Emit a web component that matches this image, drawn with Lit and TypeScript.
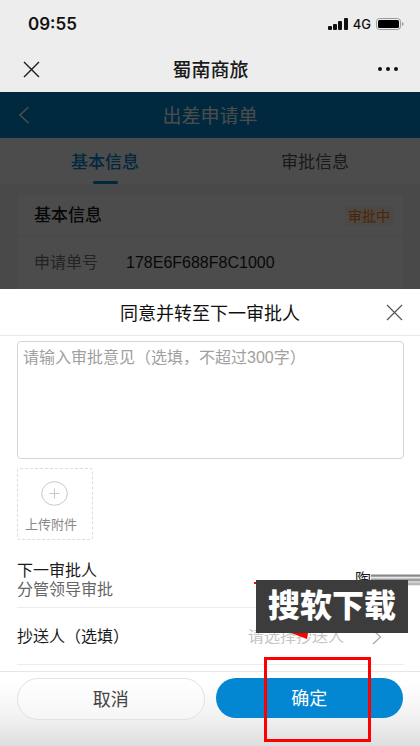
import { LitElement, html, css, svg } from "lit";
import { customElement } from "lit/decorators.js";

const cross = svg`<path d="M1 1 L16 16 M16 1 L1 16" fill="none" stroke="currentColor" />`;

@customElement("app-root")
export class AppRoot extends LitElement {
  static styles = css`
    :host {
      display: flex;
      flex-direction: column;
      min-height: 100vh;
      overflow: hidden;
      background: #ededed;
      color: #1a1a1a;
      font-family: "Liberation Sans", "Noto Sans CJK SC", sans-serif;
      font-size: 16px;
      line-height: 20px;
    }
    * {
      box-sizing: border-box;
    }
    h1, h2, h3, p {
      margin: 0;
      font-size: inherit;
      font-weight: 400;
    }
    button {
      padding: 0;
      border: 0;
      background: none;
      color: inherit;
      font: inherit;
      cursor: pointer;
    }
    svg {
      display: block;
    }
    .status {
      display: flex;
      align-items: center;
      justify-content: space-between;
      height: 46px;
      padding: 2px 16px 0 28px;
      color: #111;
      font-family: Inter, sans-serif;
    }
    .time {
      font-size: 17px;
      font-weight: 600;
    }
    .signals {
      display: flex;
      align-items: center;
      gap: 5px;
      font-size: 13px;
      font-weight: 500;
    }
    .bar {
      display: grid;
      grid-template-columns: 32px 1fr 32px;
      align-items: center;
      height: 46px;
      text-align: center;
    }
    .bar h1, .bar h2 {
      padding-top: 3px;
      font-size: 19px;
    }
    .end {
      justify-self: end;
    }
    .nav {
      padding: 0 22px 0 23px;
    }
    .nav h1 {
      font-weight: 500;
    }
    .page {
      position: relative;
      background: #f4f4f4;
    }
    .mask {
      position: absolute;
      inset: 0;
      background: rgba(0, 0, 0, 0.7);
    }
    .head {
      padding: 0 18px;
      background: #0085d0;
      color: #fff;
    }
    .tabs {
      display: grid;
      grid-template-columns: 1fr 1fr;
      background: #fff;
    }
    .tab {
      display: flex;
      flex-direction: column;
      align-items: center;
      justify-content: space-between;
      height: 46px;
      padding-top: 15px;
      color: #555;
      font-size: 17px;
    }
    .tab.on {
      color: #0085d0;
      font-weight: 500;
    }
    .tab.on::after {
      content: "";
      width: 25px;
      height: 3px;
      border-radius: 2px;
      background: #0085d0;
    }
    .card {
      margin: 11px 17px 0;
      border-radius: 4px 4px 0 0;
      background: #fff;
    }
    .card-head {
      display: flex;
      align-items: center;
      justify-content: space-between;
      height: 41px;
      padding: 2px 10px 0 17px;
      border-bottom: 1px solid #f0f0f0;
      font-size: 17px;
    }
    .card-head h3 {
      font-weight: 500;
    }
    .tag {
      padding: 0 3px;
      background: #fff0e2;
      color: #ff7a1a;
      font-size: 14px;
    }
    .field {
      display: flex;
      gap: 28px;
      align-items: center;
      height: 53px;
      padding: 0 17px;
    }
    .field span {
      color: #777;
    }
    .sheet {
      flex: 1;
      display: flex;
      flex-direction: column;
      background: #fff;
    }
    .sheet-head {
      height: 47px;
      padding: 0 17px;
      border-bottom: 1px solid #e8e8e8;
      color: #111;
    }
    .sheet-head h2 {
      font-size: 18px;
    }
    .sheet-head button {
      color: #555;
    }
    .body {
      display: flex;
      flex-direction: column;
      padding: 5px 16px 6px 17px;
    }
    textarea {
      width: 100%;
      height: 118px;
      padding: 6px 5px;
      border: 1px solid #d4d4d4;
      border-radius: 4px;
      background: #fff;
      font: inherit;
      resize: none;
      outline: 0;
    }
    textarea::placeholder {
      color: #a0a0a0;
      opacity: 1;
    }
    .upload {
      display: flex;
      flex-direction: column;
      align-items: center;
      gap: 9px;
      width: 76px;
      height: 72px;
      margin: 9px 0 11px;
      padding: 12px 8px 0 0;
      border: 1px dashed #ddd;
      border-radius: 3px;
      color: #888;
      font-size: 13px;
    }
    .upload svg {
      margin-left: 6px;
    }
    .row {
      position: relative;
      display: flex;
      align-items: center;
      justify-content: space-between;
      height: 57px;
      padding-top: 2px;
      border-bottom: 1px solid #ececec;
    }
    .label small {
      display: block;
      color: #666;
      font-size: 16px;
      line-height: 18px;
    }
    .person {
      display: flex;
      align-items: center;
      margin-right: -16px;
    }
    .smear {
      width: 49px;
      height: 12px;
      background: linear-gradient(#ddd, #777 15%, #eee 30%, #888 50%, #ddd 65%, #aaa 85%, #fff);
    }
    .pick {
      display: flex;
      align-items: center;
      gap: 28px;
      padding-right: 22px;
      color: #c4c4c4;
    }
    .stamp {
      position: absolute;
      z-index: 1;
      right: -4px;
      top: 29px;
      padding: 3px 12px 4px;
      background: #3c3c3c;
      color: #fff;
      font-size: 32px;
      font-weight: 900;
      line-height: 46px;
    }
    .stamp::before {
      content: "";
      position: absolute;
      left: -2px;
      top: 2px;
      width: 2px;
      height: 2px;
      background: #f00;
    }
    .arrow {
      position: absolute;
      right: 96px;
      top: 25px;
    }
    .foot {
      flex: 1;
      display: grid;
      grid-template-columns: 1fr 1fr;
      align-items: start;
      gap: 11px;
      padding: 6px 17px 25px;
      border-top: 1px solid #e6e6e6;
      background: linear-gradient(#fff 15%, #f2f2f2 60%, #dedede);
      font-size: 18px;
    }
    .cancel, .ok {
      position: relative;
      width: 100%;
      padding-top: 2px;
      border-radius: 21px;
    }
    .cancel {
      height: 42px;
      border: 1px solid #e2e2e2;
      background: linear-gradient(#fff, #f6f6f6);
      color: #444;
    }
    .ok {
      height: 40px;
      background: #0487d2;
      color: #fff;
    }
    .ring {
      position: absolute;
      left: 48px;
      top: -21px;
      width: 107px;
      height: 85px;
      border: 3px solid #f00;
    }
  `;

  render() {
    return html`
      <header>
        <div class="status">
          <span class="time">09:55</span>
          <span class="signals">
            <svg width="20" height="12" viewBox="0 0 20 12" fill="#111">
              <rect x="0" y="8" width="4" height="4" rx="1" />
              <rect x="5" y="6" width="4" height="6" rx="1" />
              <rect x="10" y="3" width="4" height="9" rx="1" />
              <rect x="16" y="0" width="4" height="12" rx="1" />
            </svg>
            4G
            <svg width="28" height="12" viewBox="0 0 28 12">
              <rect x="0.5" y="0.5" width="24" height="11" rx="3" fill="none" stroke="#999" />
              <rect x="2" y="2" width="21" height="8" rx="1.5" fill="#000" />
              <path d="M26 4 Q27.6 4.6 27.6 6 Q27.6 7.4 26 8 Z" fill="#999" />
            </svg>
          </span>
        </div>
        <div class="bar nav">
          <button aria-label="关闭">
            <svg width="17" height="17" viewBox="0 0 17 17" stroke-width="1.4">${cross}</svg>
          </button>
          <h1>蜀南商旅</h1>
          <button class="end" aria-label="更多">
            <svg width="20" height="4" viewBox="0 0 20 4" fill="#111">
              <circle cx="2" cy="2" r="2" /><circle cx="10" cy="2" r="2" /><circle cx="18" cy="2" r="2" />
            </svg>
          </button>
        </div>
      </header>

      <main class="page">
        <div class="bar head">
          <button aria-label="返回">
            <svg width="12" height="18" viewBox="0 0 12 18">
              <path d="M10.5 1 L2 9 L10.5 17" fill="none" stroke="#fff" stroke-width="1.6" />
            </svg>
          </button>
          <h2>出差申请单</h2>
        </div>
        <nav class="tabs">
          <button class="tab on">基本信息</button>
          <button class="tab">审批信息</button>
        </nav>
        <section class="card">
          <div class="card-head"><h3>基本信息</h3><span class="tag">审批中</span></div>
          <div class="field"><span>申请单号</span>178E6F688F8C1000</div>
        </section>
        <div class="mask"></div>
      </main>

      <section class="sheet" role="dialog" aria-labelledby="title">
        <div class="bar sheet-head">
          <span></span>
          <h2 id="title">同意并转至下一审批人</h2>
          <button class="end" aria-label="关闭">
            <svg width="17" height="17" viewBox="0 0 17 17" stroke-width="1.2">${cross}</svg>
          </button>
        </div>
        <div class="body">
          <textarea aria-label="审批意见" placeholder="请输入审批意见（选填，不超过300字）"></textarea>
          <button class="upload">
            <svg width="27" height="25" viewBox="0 0 27 25" fill="none" stroke="#c8c8c8">
              <ellipse cx="13.5" cy="12.5" rx="12.8" ry="11.8" />
              <path d="M8.5 12.5 H18.5 M13.5 7.5 V17.5" />
            </svg>
            上传附件
          </button>
          <div class="row">
            <p class="label">下一审批人<small>分管领导审批</small></p>
            <span class="person">陶<i class="smear"></i></span>
            <span class="stamp">搜软下载</span>
          </div>
          <div class="row">
            <p class="label">抄送人（选填）</p>
            <button class="pick">
              请选择抄送人
              <svg width="10" height="16" viewBox="0 0 10 16">
                <path d="M1 1 L8.5 8 L1 15" fill="none" stroke="#aaa" stroke-width="1.3" />
              </svg>
            </button>
            <svg class="arrow" width="17" height="6" viewBox="0 0 17 6">
              <path d="M0 0 H17 L16 6 Z" fill="#f00" />
            </svg>
          </div>
        </div>
        <footer class="foot">
          <button class="cancel">取消</button>
          <button class="ok">确定<i class="ring"></i></button>
        </footer>
      </section>
    `;
  }
}
